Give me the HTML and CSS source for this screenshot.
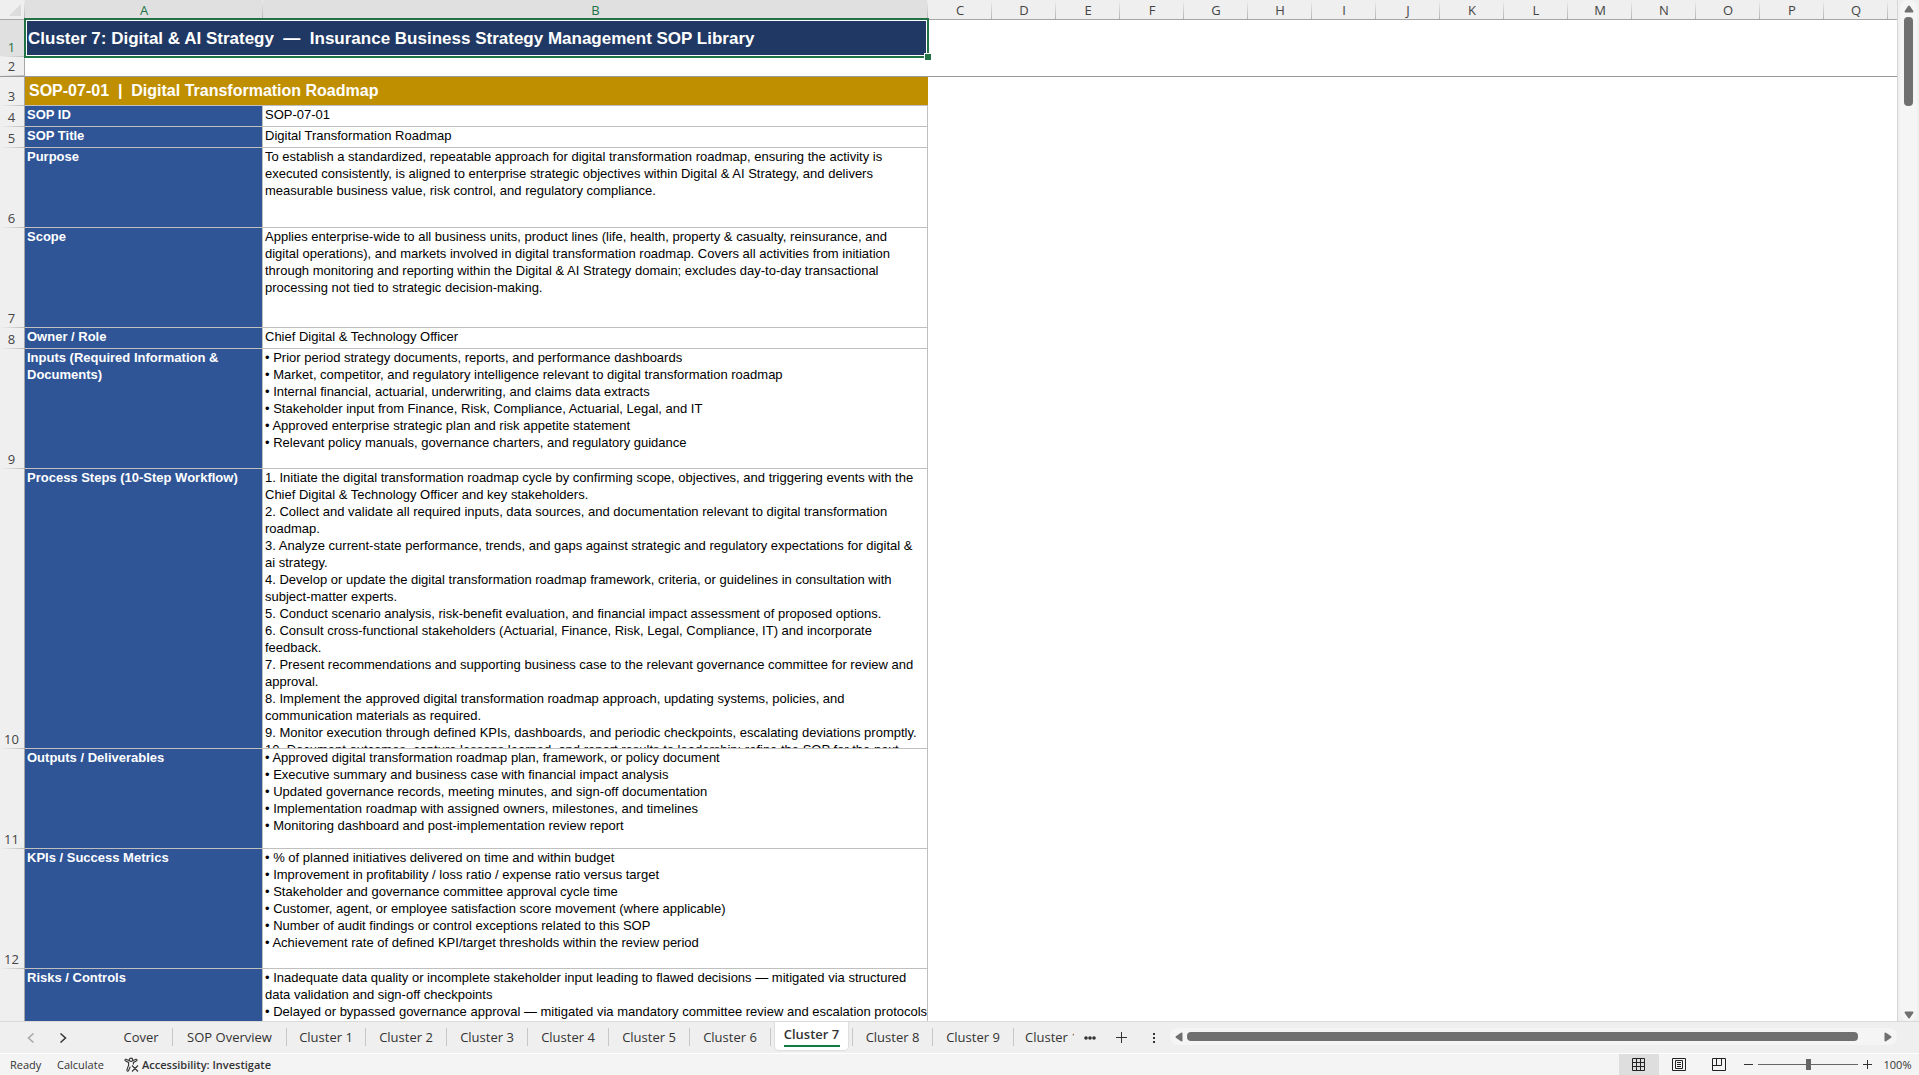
FILE: index.html
```html
<!DOCTYPE html>
<html lang="en">
<head>
<meta charset="utf-8">
<title>Insurance Business Strategy Management SOP Library</title>
<link rel="stylesheet" href="styles.css">
</head>
<body>
<main class="workspace">
  <div class="sheet">
    <table class="grid">
      <colgroup>
        <col class="col-num"><col class="col-a"><col class="col-b">
        <col class="col-std"><col class="col-std"><col class="col-std"><col class="col-std"><col class="col-std">
        <col class="col-std"><col class="col-std"><col class="col-std"><col class="col-std"><col class="col-std">
        <col class="col-std"><col class="col-std"><col class="col-std"><col class="col-std"><col class="col-std">
        <col>
      </colgroup>
      <thead>
        <tr>
          <th class="corner"><svg width="12" height="12" viewBox="0 0 12 12" aria-hidden="true"><path d="M12 0v12H0z" fill="#dcdcdc"/></svg></th>
          <th class="picked" scope="col">A</th><th class="picked" scope="col">B</th>
          <th scope="col">C</th><th scope="col">D</th><th scope="col">E</th><th scope="col">F</th><th scope="col">G</th>
          <th scope="col">H</th><th scope="col">I</th><th scope="col">J</th><th scope="col">K</th><th scope="col">L</th>
          <th scope="col">M</th><th scope="col">N</th><th scope="col">O</th><th scope="col">P</th><th scope="col">Q</th>
          <th class="rest"></th>
        </tr>
      </thead>
      <tbody>
        <tr class="row-title"><th class="picked" scope="row">1</th><td class="title active-cell" colspan="2">Cluster 7: Digital &amp; AI Strategy&nbsp; —&nbsp; Insurance Business Strategy Management SOP Library</td><td colspan="16"></td></tr>
        <tr class="row-frozen"><th scope="row">2</th><td colspan="18"></td></tr>
        <tr class="row-section"><th scope="row">3</th><td class="section" colspan="2">SOP-07-01&nbsp; |&nbsp; Digital Transformation Roadmap</td><td colspan="16"></td></tr>
        <tr class="row-line"><th scope="row">4</th><td class="label">SOP ID</td><td class="value">SOP-07-01</td><td colspan="16"></td></tr>
        <tr class="row-line"><th scope="row">5</th><td class="label">SOP Title</td><td class="value">Digital Transformation Roadmap</td><td colspan="16"></td></tr>
        <tr class="row-80"><th scope="row">6</th><td class="label">Purpose</td><td class="value">To establish a standardized, repeatable approach for digital transformation roadmap, ensuring the activity is<br>executed consistently, is aligned to enterprise strategic objectives within Digital &amp; AI Strategy, and delivers<br>measurable business value, risk control, and regulatory compliance.</td><td colspan="16"></td></tr>
        <tr class="row-100"><th scope="row">7</th><td class="label">Scope</td><td class="value">Applies enterprise-wide to all business units, product lines (life, health, property &amp; casualty, reinsurance, and<br>digital operations), and markets involved in digital transformation roadmap. Covers all activities from initiation<br>through monitoring and reporting within the Digital &amp; AI Strategy domain; excludes day-to-day transactional<br>processing not tied to strategic decision-making.</td><td colspan="16"></td></tr>
        <tr class="row-line"><th scope="row">8</th><td class="label">Owner / Role</td><td class="value">Chief Digital &amp; Technology Officer</td><td colspan="16"></td></tr>
        <tr class="row-120"><th scope="row">9</th><td class="label">Inputs (Required Information &amp;<br>Documents)</td><td class="value">• Prior period strategy documents, reports, and performance dashboards<br>• Market, competitor, and regulatory intelligence relevant to digital transformation roadmap<br>• Internal financial, actuarial, underwriting, and claims data extracts<br>• Stakeholder input from Finance, Risk, Compliance, Actuarial, Legal, and IT<br>• Approved enterprise strategic plan and risk appetite statement<br>• Relevant policy manuals, governance charters, and regulatory guidance</td><td colspan="16"></td></tr>
        <tr class="row-280"><th scope="row">10</th><td class="label">Process Steps (10-Step Workflow)</td><td class="value"><div class="clip">1. Initiate the digital transformation roadmap cycle by confirming scope, objectives, and triggering events with the<br>Chief Digital &amp; Technology Officer and key stakeholders.<br>2. Collect and validate all required inputs, data sources, and documentation relevant to digital transformation<br>roadmap.<br>3. Analyze current-state performance, trends, and gaps against strategic and regulatory expectations for digital &amp;<br>ai strategy.<br>4. Develop or update the digital transformation roadmap framework, criteria, or guidelines in consultation with<br>subject-matter experts.<br>5. Conduct scenario analysis, risk-benefit evaluation, and financial impact assessment of proposed options.<br>6. Consult cross-functional stakeholders (Actuarial, Finance, Risk, Legal, Compliance, IT) and incorporate<br>feedback.<br>7. Present recommendations and supporting business case to the relevant governance committee for review and<br>approval.<br>8. Implement the approved digital transformation roadmap approach, updating systems, policies, and<br>communication materials as required.<br>9. Monitor execution through defined KPIs, dashboards, and periodic checkpoints, escalating deviations promptly.<br>10. Document outcomes, capture lessons learned, and report results to leadership; refine the SOP for the next</div></td><td colspan="16"></td></tr>
        <tr class="row-100"><th scope="row">11</th><td class="label">Outputs / Deliverables</td><td class="value">• Approved digital transformation roadmap plan, framework, or policy document<br>• Executive summary and business case with financial impact analysis<br>• Updated governance records, meeting minutes, and sign-off documentation<br>• Implementation roadmap with assigned owners, milestones, and timelines<br>• Monitoring dashboard and post-implementation review report</td><td colspan="16"></td></tr>
        <tr class="row-120"><th scope="row">12</th><td class="label">KPIs / Success Metrics</td><td class="value">• % of planned initiatives delivered on time and within budget<br>• Improvement in profitability / loss ratio / expense ratio versus target<br>• Stakeholder and governance committee approval cycle time<br>• Customer, agent, or employee satisfaction score movement (where applicable)<br>• Number of audit findings or control exceptions related to this SOP<br>• Achievement rate of defined KPI/target thresholds within the review period</td><td colspan="16"></td></tr>
        <tr class="row-120"><th scope="row"></th><td class="label">Risks / Controls</td><td class="value">• Inadequate data quality or incomplete stakeholder input leading to flawed decisions — mitigated via structured<br>data validation and sign-off checkpoints<br>• Delayed or bypassed governance approval — mitigated via mandatory committee review and escalation protocols</td><td colspan="16"></td></tr>
      </tbody>
    </table>
  </div>
  <div class="vscroll">
    <button class="arrow" aria-label="Scroll up"><svg width="10" height="8" viewBox="0 0 10 8"><path d="M5 .5Q5.500 .5 6 1.200L9.300 6Q9.700 7.500 8.500 7.500H1.500Q.3 7.500.7 6L4 1.200Q4.500.5 5 .5z"/></svg></button>
    <div class="vthumb"></div>
    <button class="arrow arrow-end" aria-label="Scroll down"><svg width="10" height="8" viewBox="0 0 10 8"><path d="M5 7.500Q4.500 7.500 4 6.800L.7 2Q.3.5 1.500.5H8.500Q9.700.5 9.300 2L6 6.800Q5.500 7.500 5 7.500z"/></svg></button>
  </div>
</main>

<nav class="tabbar" aria-label="Sheets">
  <div class="tab-arrows">
    <button aria-label="Previous sheet" class="dim"><svg width="8" height="12" viewBox="0 0 8 12"><path d="M6.500 1.500L1.500 6l5 4.500"/></svg></button>
    <button aria-label="Next sheet"><svg width="8" height="12" viewBox="0 0 8 12"><path d="M1.500 1.500L6.500 6l-5 4.500"/></svg></button>
  </div>
  <div class="tabs">
    <button class="tab tab-cover">Cover</button>
    <button class="tab tab-overview">SOP Overview</button>
    <button class="tab tab-first">Cluster 1</button>
    <button class="tab">Cluster 2</button>
    <button class="tab">Cluster 3</button>
    <button class="tab">Cluster 4</button>
    <button class="tab">Cluster 5</button>
    <button class="tab">Cluster 6</button>
    <button class="tab current" aria-current="page"><span>Cluster 7</span></button>
    <button class="tab">Cluster 8</button>
    <button class="tab">Cluster 9</button>
    <button class="tab cut">Cluster 10</button>
  </div>
  <div class="tab-tools">
    <button aria-label="More sheets"><svg width="12" height="12" viewBox="0 0 12 12"><g fill="#333" stroke="none"><circle cx="2" cy="6" r="1.800"/><circle cx="6" cy="6" r="1.800"/><circle cx="10" cy="6" r="1.800"/></g></svg></button>
    <button aria-label="New sheet"><svg width="12" height="12" viewBox="0 0 12 12"><path d="M5.500 0v11M0 5.500h11"/></svg></button>
    <button aria-label="Resize scroll bar"><svg width="12" height="12" viewBox="0 0 12 12"><path fill="#333" stroke="none" d="M5 1h2v2H5zM5 5h2v2H5zM5 9h2v2H5z"/></svg></button>
  </div>
  <div class="hscroll">
    <button class="arrow" aria-label="Scroll left"><svg width="8" height="10" viewBox="0 0 8 10"><path d="M.5 5Q.5 4.500 1.200 4L6 .7Q7.500.3 7.500 1.500V8.500Q7.500 9.700 6 9.300L1.200 6Q.5 5.500.5 5z"/></svg></button>
    <div class="hthumb"></div>
    <button class="arrow" aria-label="Scroll right"><svg width="8" height="10" viewBox="0 0 8 10"><path d="M7.500 5Q7.500 4.500 6.800 4L2 .7Q.5.3.5 1.500V8.500Q.5 9.700 2 9.300L6.800 6Q7.500 5.500 7.500 5z"/></svg></button>
  </div>
</nav>

<footer class="status">
  <span class="ready">Ready</span>
  <button class="calc">Calculate</button>
  <button class="access">
    <svg width="15" height="16" viewBox="0 0 15 16" fill="none" stroke="#333" stroke-width="1.100" aria-hidden="true"><circle cx="7" cy="2.800" r="1.700"/><path d="M5.200 3.600L2.300 2.400Q1 2 .9 3.100Q.9 3.700 1.600 4L4.600 5.400V8.200L2.900 12.800Q2.700 14 3.600 14.200Q4.300 14.200 4.600 13.500L6.300 9.600M8.800 3.600L11.700 2.400Q13 2 13.100 3.100Q13.100 3.700 12.400 4L9.400 5.400V7.400M8 8.500L14 14.500M14 8.500L8 14.500"/></svg>
    Accessibility: Investigate</button>
  <div class="views">
    <button class="view on" aria-label="Normal view"><svg width="14" height="14" viewBox="0 0 14 14"><path d="M.5.5h12v12H.5zM4.500.5v12M8.500.5v12M.5 4.500h12M.5 8.500h12"/></svg></button>
    <button class="view" aria-label="Page layout view"><svg width="14" height="14" viewBox="0 0 14 14"><path d="M.5.5h13v12H.5zM3.500 2.500h7v8h-7zM5 4.500h4M5 6.500h4M5 8.500h4"/></svg></button>
    <button class="view" aria-label="Page break preview"><svg width="14" height="14" viewBox="0 0 14 14"><path d="M.5.5h13v12H.5zM4.500.5v7M9.500.5v7M.5 7.500h9"/></svg></button>
  </div>
  <button class="step" aria-label="Zoom out"><svg width="9" height="9" viewBox="0 0 9 9"><path d="M0 4.500h9"/></svg></button>
  <input class="zoom" type="range" min="0" max="200" value="100" aria-label="Zoom">
  <button class="step" aria-label="Zoom in"><svg width="9" height="9" viewBox="0 0 9 9"><path d="M0 4.500h9M4.500 0v9"/></svg></button>
  <button class="percent">100%</button>
</footer>
</body>
</html>
```

FILE: styles.css
```css
* { box-sizing: border-box; }

body {
  margin: 0;
  height: 100vh;
  display: grid;
  grid-template-rows: minmax(0, 1fr) 33px 21px;
  overflow: hidden;
  background: #efefef;
  color: #333;
  font-family: "Open Sans", "Noto Sans", sans-serif;
}

button {
  margin: 0;
  padding: 0;
  border: 0;
  background: none;
  color: inherit;
  font: inherit;
}

svg { display: block; }

/* Worksheet */
.workspace {
  display: flex;
  min-height: 0;
}

.sheet {
  flex: 1;
  min-width: 0;
  overflow: hidden;
  background: #fff;
  border-right: 1px solid #d6d6d6;
}

.grid {
  width: 100%;
  table-layout: fixed;
  border-collapse: separate;
  border-spacing: 0;
}

.col-num { width: 25px; }
.col-a { width: 238px; }
.col-b { width: 665px; }
.col-std { width: 64px; }

.grid th {
  padding: 0;
  background: #efefef;
  color: #444;
  font-size: 13px;
  font-weight: 400;
  line-height: 18px;
}

.grid thead th {
  height: 20px;
  border-bottom: 1px solid #a6a6a6;
  background: linear-gradient(#efefef, #b5b5b5) right / 1px 100% no-repeat #efefef;
  vertical-align: bottom;
}

.grid thead th.rest { background: #efefef; }

.grid thead th.corner { padding: 0 0 3px 9px; }

.grid tbody th {
  padding: 0 1px 1px 0;
  border-right: 1px solid #a6a6a6;
  vertical-align: bottom;
  background: linear-gradient(90deg, #efefef, #bdbdbd) bottom / 100% 1px no-repeat #efefef;
}

.grid thead .picked,
.grid tbody .picked {
  background-color: #e0e0e0;
  color: #217346;
}

td {
  padding: 0;
  vertical-align: top;
  white-space: nowrap;
  font-family: "Liberation Sans", Arial, sans-serif;
  font-size: 13px;
  line-height: 17px;
}

.row-title { height: 37px; }
.row-frozen { height: 20px; }
.row-section { height: 29px; }
.row-line { height: 21px; }
.row-80 { height: 80px; }
.row-100 { height: 100px; }
.row-120 { height: 120px; }
.row-280 { height: 280px; }

.row-frozen th,
.row-frozen td { border-bottom: 1px solid #999; }

.title,
.section {
  vertical-align: middle;
  color: #fff;
  font-weight: 700;
  line-height: 20px;
}

.title {
  padding-left: 3px;
  background: #203864;
  font-size: 17px;
}

.section {
  padding-left: 4px;
  background: #bf8f00;
  border-bottom: 1px solid #bfbfbf;
  font-size: 16px;
}

.active-cell { position: relative; }

/* Selection frame and fill handle drawn over the active cell */
.active-cell::before {
  content: "";
  position: absolute;
  inset: -2px -1px -1px;
  border: 2px solid #217346;
  box-shadow: inset 0 0 0 1px #fff;
}

.active-cell::after {
  content: "";
  position: absolute;
  right: -3px;
  bottom: -3px;
  width: 6px;
  height: 6px;
  border: solid #fff;
  border-width: 1px 0 0 1px;
  background: #217346;
}

.label,
.value {
  border-right: 1px solid #bfbfbf;
  border-bottom: 1px solid #bfbfbf;
}

.label {
  padding-left: 2px;
  background: #2f5597;
  color: #fff;
  font-weight: 700;
}

.value {
  padding-left: 2px;
  color: #000;
}

.clip {
  height: 279px;
  overflow: hidden;
}

/* Scroll bars */
.arrow {
  display: grid;
  place-items: center;
  fill: #707070;
}

.vscroll {
  width: 17px;
  margin: 0 2px;
  padding: 5px 0 2px;
  display: flex;
  flex-direction: column;
  align-items: center;
  border-radius: 8px;
  background: #f5f5f5;
}

.vthumb {
  width: 9px;
  height: 89px;
  margin-top: 4px;
  border-radius: 4px;
  background: #707070;
}

.arrow-end { margin-top: auto; }

.hscroll {
  flex: 1;
  height: 17px;
  margin: 6px 22px 0 0;
  padding: 0 5px;
  display: flex;
  align-items: center;
  gap: 4px;
  border-radius: 8px;
  background: #f5f5f5;
}

.hthumb {
  flex: 1;
  height: 9px;
  margin-right: 22px;
  border-radius: 4px;
  background: #707070;
}

/* Sheet tabs */
.tabbar {
  display: flex;
  border-top: 1px solid #d9d9d9;
  border-bottom: 1px solid #fff;
  font-size: 13px;
}

.tab-arrows {
  width: 110px;
  padding-left: 27px;
  display: flex;
  gap: 24px;
  align-items: center;
  fill: none;
  stroke: #333;
  stroke-width: 1.5;
}

.dim { stroke: #a6a6a6; }

.tabs {
  width: 964px;
  display: flex;
  overflow: hidden;
}

.tab {
  width: 81px;
  flex: none;
  height: 18px;
  margin-top: 6px;
  border-right: 1px solid #c8c8c8;
  line-height: 18px;
  white-space: nowrap;
}

.tab-cover { width: 63px; }
.tab-overview { width: 114px; }
.tab-first { width: 79px; }

.current {
  height: 28px;
  margin: 0;
  padding: 0 4px;
  border-right: 0;
  font-weight: 600;
}

.current span {
  display: block;
  height: 28px;
  padding-top: 3px;
  background: linear-gradient(#107c41, #107c41) 50% 23px / 56px 2px no-repeat #fff;
  border-radius: 0 0 4px 4px;
  box-shadow: 0 0 1px 1px #dcdcdc;
}

.current + .tab {
  border-left: 1px solid #c8c8c8;
}

.cut {
  padding-left: 11px;
  border-right: 0;
  text-align: left;
}

.tab-tools {
  width: 96px;
  padding-left: 10px;
  display: flex;
  align-items: center;
  gap: 20px;
  fill: none;
  stroke: #333;
}

/* Status bar */
.status {
  display: flex;
  align-items: center;
  padding-left: 10px;
  background: #f4f4f4;
  font-size: 11px;
  line-height: 20px;
}

.ready { width: 47px; }
.calc { width: 67px; text-align: left; }

.access {
  display: flex;
  align-items: center;
  gap: 3px;
  font-weight: 600;
}

.views {
  display: flex;
  height: 21px;
  margin-left: auto;
}

.view {
  width: 40px;
  display: grid;
  place-items: center;
  fill: none;
  stroke: #222;
}

.on { background: #dedede; }

.step {
  width: 9px;
  stroke: #333;
}

.views + .step { margin-left: 5px; }

.zoom {
  appearance: none;
  width: 100px;
  height: 11px;
  margin: 0 5px;
  background: linear-gradient(#666, #666) center / 100% 1px no-repeat;
}

.zoom::-webkit-slider-thumb {
  appearance: none;
  width: 5px;
  height: 11px;
  background: #666;
}

.percent {
  width: 47px;
  padding-left: 4px;
  text-align: center;
}
```
